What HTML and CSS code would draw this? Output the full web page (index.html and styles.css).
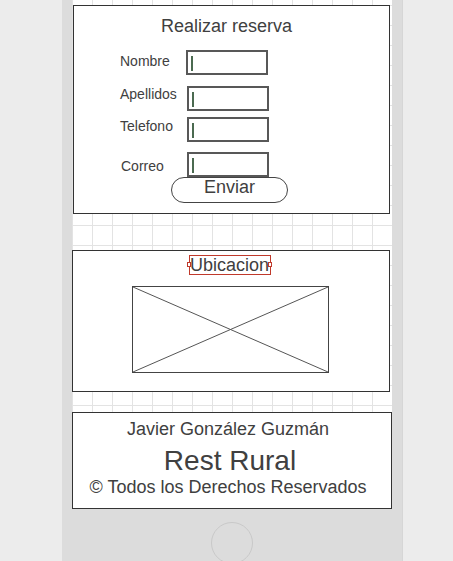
FILE: index.html
```html
<!DOCTYPE html>
<html lang="es">
<head>
<meta charset="utf-8">
<title>Rest Rural</title>
<link rel="stylesheet" href="styles.css">
</head>
<body>
<div class="phone">
  <div class="screen">
    <section class="card card-form">
      <h2 class="form-title">Realizar reserva</h2>
      <div class="row row-1"><span class="label">Nombre</span><span class="field"><span class="caret"></span></span></div>
      <div class="row row-2"><span class="label">Apellidos</span><span class="field"><span class="caret"></span></span></div>
      <div class="row row-3"><span class="label">Telefono</span><span class="field"><span class="caret"></span></span></div>
      <div class="row row-4"><span class="label">Correo</span><span class="field"><span class="caret"></span></span></div>
      <button class="send" type="button">Enviar</button>
    </section>
    <section class="card card-map">
      <span class="loc-label">Ubicacion<span class="handle handle-l"></span><span class="handle handle-r"></span></span>
      <div class="map-ph">
        <svg class="map-x" viewBox="0 0 195 85" preserveAspectRatio="none">
          <line x1="0" y1="0" x2="195" y2="85"/>
          <line x1="0" y1="85" x2="195" y2="0"/>
        </svg>
      </div>
    </section>
    <footer class="card card-foot">
      <p class="author">Javier González Guzmán</p>
      <p class="brand">Rest Rural</p>
      <p class="rights">© Todos los Derechos Reservados</p>
    </footer>
  </div>
  <div class="home"></div>
</div>
</body>
</html>
```
FILE: styles.css
```css
html, body {
  margin: 0;
  padding: 0;
  background: #ececec;
  height: 100%;
  overflow: hidden;
}
body {
  font-family: "Liberation Sans", Arial, sans-serif;
  color: #404040;
}
.phone {
  margin-left: 62px;
  width: 341px;
  height: 561px;
  background: #dcdcdc;
  box-sizing: border-box;
  border-right: 1px solid #d6d6d6;
  display: flex;
  flex-direction: column;
}
.screen {
  margin-left: 10px;
  width: 320px;
  padding-top: 5px;
  background-color: #fff;
  background-image:
    linear-gradient(to right, #e3e3e3 1px, transparent 1px),
    linear-gradient(to bottom, #e3e3e3 1px, transparent 1px);
  background-size: 20px 20px;
  background-position: 0 5px;
  display: flex;
  flex-direction: column;
  align-items: flex-start;
}
.card {
  box-sizing: border-box;
  background: #fff;
  border: 1px solid #333;
}
.card-form {
  margin-left: 1px;
  width: 317px;
  height: 209px;
  padding-top: 10px;
}
.form-title {
  margin: 0;
  padding-right: 10px;
  font-size: 18px;
  font-weight: normal;
  line-height: 20px;
  text-align: center;
}
.row {
  display: flex;
  align-items: flex-start;
  padding-left: 46px;
}
.label {
  width: 66px;
  font-size: 14px;
  line-height: 16px;
}
.field {
  display: block;
  width: 82px;
  height: 25px;
  box-sizing: border-box;
  border: 2px solid #585858;
  background: #fff;
}
.caret {
  display: block;
  margin: 4px 0 0 3px;
  width: 2px;
  height: 15px;
  background: #4b6a50;
}
.row-1 { margin-top: 14px; }
.row-1 .label { padding-top: 3px; }
.row-2 { margin-top: 11px; }
.row-2 .field { margin-left: 1px; }
.row-3 { margin-top: 6px; }
.row-3 .label { padding-top: 1px; }
.row-3 .field { margin-left: 1px; }
.row-4 { margin-top: 10px; }
.row-4 .label { padding-top: 6px; padding-left: 1px; }
.send {
  display: block;
  margin: 0 0 0 97px;
  width: 117px;
  height: 26px;
  box-sizing: border-box;
  padding: 0 0 6px;
  border: 1px solid #444;
  border-radius: 13px;
  background: #fff;
  color: #404040;
  font-family: "Liberation Sans", Arial, sans-serif;
  font-size: 18px;
  line-height: 18px;
}
.card-map {
  margin-top: 36px;
  width: 318px;
  height: 142px;
  padding: 4px 2px 0 0;
  text-align: center;
}
.loc-label {
  position: relative;
  display: inline-block;
  vertical-align: top;
  border: 1px solid #c0392b;
  padding: 0 1px 0 0;
  font-size: 18px;
  line-height: 18px;
}
.handle {
  position: absolute;
  top: 6px;
  width: 2px;
  height: 3px;
  background: #fff;
  border: 1px solid #c0392b;
}
.handle-l { left: -3px; }
.handle-r { right: -2px; }
.map-ph {
  margin: 11px auto 0;
  width: 197px;
  height: 87px;
  box-sizing: border-box;
  border: 1px solid #444;
}
.map-x {
  display: block;
  width: 100%;
  height: 100%;
}
.map-x line {
  stroke: #555;
  stroke-width: 1;
  vector-effect: non-scaling-stroke;
}
.card-foot {
  margin-top: 20px;
  width: 320px;
  height: 97px;
  padding: 6px 8px 0 0;
  text-align: center;
}
.card-foot p {
  margin: 0;
}
.author {
  font-size: 18px;
  line-height: 20px;
}
.brand {
  margin-top: 6px !important;
  padding-left: 4px;
  font-size: 28px;
  line-height: 32px;
}
.rights {
  font-size: 18px;
  line-height: 20px;
}
.home {
  margin: 13px auto 0;
  width: 42px;
  height: 42px;
  box-sizing: border-box;
  border: 1px solid #c9c9c9;
  border-radius: 50%;
  flex: none;
}
```
